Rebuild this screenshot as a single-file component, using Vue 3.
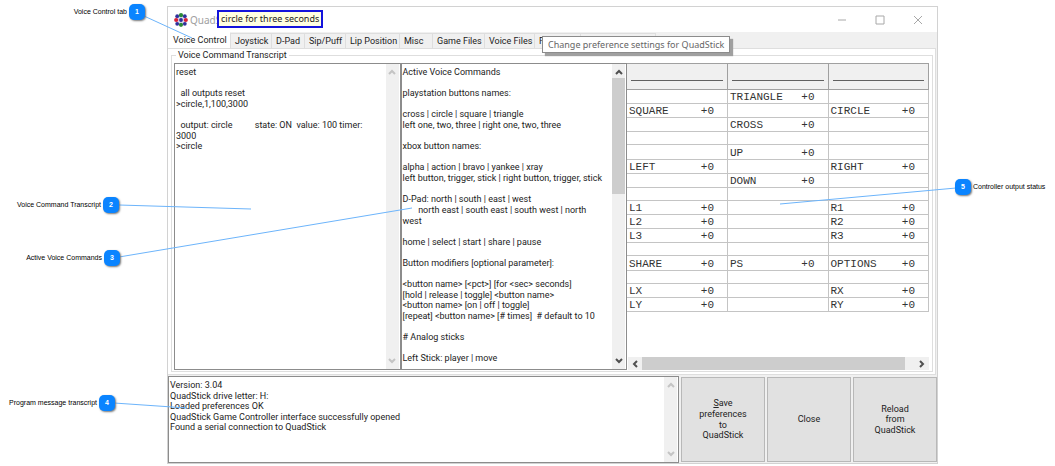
<script setup>
const tabs = [
  { label: 'Voice Control', size: 'w63' },
  { label: 'Joystick', size: 'w41' },
  { label: 'D-Pad', size: 'w33' },
  { label: 'Sip/Puff', size: 'w41' },
  { label: 'Lip Position', size: 'w54' },
  { label: 'Misc', size: 'w33' },
  { label: 'Game Files', size: 'w52' },
  { label: 'Voice Files', size: 'w50' },
  { label: 'F', size: 'w46' },
  { label: '', size: 'w75' }
]

const transcript = `reset

  all outputs reset
>circle,1,100,3000

  output: circle          state: ON  value: 100 timer:
3000
>circle`

const commands = `Active Voice Commands

playstation buttons names:

cross | circle | square | triangle
left one, two, three | right one, two, three

xbox button names:

alpha | action | bravo | yankee | xray
left button, trigger, stick | right button, trigger, stick

D-Pad: north | south | east | west
       north east | south east | south west | north
west

home | select | start | share | pause

Button modifiers [optional parameter]:

<button name> [<pct>] [for <sec> seconds]
[hold | release | toggle] <button name>
<button name> [on | off | toggle]
[repeat] <button name> [# times]  # default to 10

# Analog sticks

Left Stick: player | move`

const messages = `Version: 3.04
QuadStick drive letter: H:
Loaded preferences OK
QuadStick Game Controller interface successfully opened
Found a serial connection to QuadStick`

const outputs = [
  ['', 'TRIANGLE', ''],
  ['SQUARE', '', 'CIRCLE'],
  ['', 'CROSS', ''],
  ['', '', ''],
  ['', 'UP', ''],
  ['LEFT', '', 'RIGHT'],
  ['', 'DOWN', ''],
  ['', '', ''],
  ['L1', '', 'R1'],
  ['L2', '', 'R2'],
  ['L3', '', 'R3'],
  ['', '', ''],
  ['SHARE', 'PS', 'OPTIONS'],
  ['', '', ''],
  ['LX', '', 'RX'],
  ['LY', '', 'RY']
]
</script>

<template>
  <div class="stage">
    <main class="window">
      <header class="titlebar">
        <svg class="logo" viewBox="0 0 14 14" aria-hidden="true">
          <circle cx="7" cy="7" r="6" fill="#dcdcf0" />
          <g fill="#30309c">
            <circle cx="3.2" cy="3.2" r="1.9" /><circle cx="10.8" cy="3.2" r="1.9" />
            <circle cx="3.2" cy="10.8" r="1.9" /><circle cx="10.8" cy="10.8" r="1.9" />
            <circle cx="7" cy="7" r="1.9" />
          </g>
          <g fill="#2c8a3a"><circle cx="7" cy="2.2" r="2.1" /><circle cx="7" cy="11.8" r="2.1" /></g>
          <g fill="#d8203a"><circle cx="2.2" cy="7" r="2.1" /><circle cx="11.8" cy="7" r="2.1" /></g>
        </svg>
        <h1 class="title">QuadS</h1>
        <div class="controls">
          <button type="button" aria-label="Minimize"><svg viewBox="0 0 10 10"><path d="M1 5H9" /></svg></button>
          <button type="button" aria-label="Maximize"><svg viewBox="0 0 10 10"><path d="M1 1H9V9H1Z" /></svg></button>
          <button type="button" aria-label="Close window"><svg viewBox="0 0 10 10"><path d="M1 1L9 9M9 1L1 9" /></svg></button>
        </div>
        <div class="heard">circle for three seconds</div>
      </header>

      <nav class="tabs" role="tablist">
        <button
          v-for="(tab, i) in tabs"
          :key="i"
          type="button"
          role="tab"
          class="tab"
          :class="[tab.size, { active: i === 0 }]"
          :aria-selected="i === 0"
        >{{ tab.label }}</button>
        <div class="tooltip" role="tooltip">Change preference settings for QuadStick</div>
      </nav>

      <section class="page">
        <fieldset class="group">
          <legend>Voice Command Transcript</legend>
          <div class="panels">
            <div class="textpane">
              <textarea readonly aria-label="Voice command transcript" :value="transcript"></textarea>
              <div class="vbar idle">
                <svg viewBox="0 0 8 6"><path d="M1 5L4 2L7 5" /></svg>
                <svg viewBox="0 0 8 6"><path d="M1 1L4 4L7 1" /></svg>
              </div>
            </div>
            <div class="textpane">
              <textarea readonly aria-label="Active voice commands" :value="commands"></textarea>
              <div class="vbar">
                <svg viewBox="0 0 8 6"><path d="M1 5L4 2L7 5" /></svg>
                <div class="track"><div class="thumb"></div></div>
                <svg viewBox="0 0 8 6"><path d="M1 1L4 4L7 1" /></svg>
              </div>
            </div>
            <div class="status">
              <table>
                <thead>
                  <tr><th v-for="n in 3" :key="n" scope="col"><span class="rule"></span></th></tr>
                </thead>
                <tbody>
                  <tr v-for="(row, r) in outputs" :key="r">
                    <td v-for="(name, c) in row" :key="c">
                      <div v-if="name" class="reading"><span>{{ name }}</span><span>+0</span></div>
                    </td>
                  </tr>
                </tbody>
              </table>
              <div class="hbar">
                <svg viewBox="0 0 6 8"><path d="M5 1L2 4L5 7" /></svg>
                <div class="hthumb"></div>
                <svg viewBox="0 0 6 8"><path d="M1 1L4 4L1 7" /></svg>
              </div>
            </div>
          </div>
        </fieldset>
      </section>

      <footer class="bottom">
        <div class="textpane">
          <textarea readonly aria-label="Program messages" :value="messages"></textarea>
          <div class="vbar idle">
            <svg viewBox="0 0 8 6"><path d="M1 5L4 2L7 5" /></svg>
            <svg viewBox="0 0 8 6"><path d="M1 1L4 4L7 1" /></svg>
          </div>
        </div>
        <button type="button" class="action"><span><u>S</u>ave<br>preferences<br>to<br>QuadStick</span></button>
        <button type="button" class="action">Close</button>
        <button type="button" class="action"><span>Reload<br>from<br>QuadStick</span></button>
      </footer>
    </main>

    <svg class="leads left" viewBox="0 0 420 466" aria-hidden="true">
      <path d="M144 16L192 38M119 205L251 209M119 257L412 208M114 403L187 408" />
    </svg>
    <svg class="leads right" viewBox="0 0 275 466" aria-hidden="true">
      <path d="M176 188L0 204" />
    </svg>
    <div class="callout c1"><span>Voice Control tab</span><b>1</b></div>
    <div class="callout c2"><span>Voice Command Transcript</span><b>2</b></div>
    <div class="callout c3"><span>Active Voice Commands</span><b>3</b></div>
    <div class="callout c4"><span>Program message transcript</span><b>4</b></div>
    <div class="callout c5"><b>5</b><span>Controller output status</span></div>
  </div>
</template>

<style>
body { margin: 0; background: #fff; }
</style>

<style scoped>
* { box-sizing: border-box; }
.stage {
  position: relative;
  padding: 6px 117px 2px 167px;
  font-family: Roboto, "DejaVu Sans Condensed", sans-serif;
  font-size: 9px;
  line-height: 1.18;
  color: #222;
}
button, textarea {
  font: inherit;
  color: inherit;
  margin: 0;
  padding: 0;
  border: 0;
  border-radius: 0;
}
.window {
  display: flex;
  flex-direction: column;
  border: 1px solid #d2d2d2;
  background: #f0f0f0;
}
.titlebar {
  position: relative;
  display: flex;
  align-items: center;
  height: 25px;
  padding-left: 6px;
  background: #fff;
}
.logo { width: 14px; height: 14px; }
.title {
  margin: 0 0 0 2px;
  font: 400 10px/16px "Noto Sans", sans-serif;
  color: #a0a0a0;
}
.controls { display: flex; margin-left: auto; }
.controls button {
  display: flex;
  align-items: center;
  justify-content: center;
  width: 38px;
  height: 24px;
  background: none;
}
.controls svg { width: 10px; height: 10px; fill: none; stroke: #a8a8a8; stroke-width: 1; }
.heard {
  position: absolute;
  left: 49px;
  top: 3px;
  padding: 0 2px;
  border: 2px solid #1414dc;
  background: #ffffe1;
  font: 9px/14px "Noto Sans", sans-serif;
  white-space: nowrap;
}
.tabs {
  position: relative;
  display: flex;
  align-items: flex-end;
  height: 16px;
}
.tab {
  height: 15px;
  padding-left: 4px;
  border: 1px solid #dedede;
  border-width: 1px 1px 0 0;
  background: #f0f0f0;
  text-align: left;
  white-space: nowrap;
}
.tab.active { height: 16px; background: #fff; border-top-color: #fff; padding-left: 5px; }
.w63 { width: 63px; }
.w41 { width: 41px; }
.w33 { width: 33px; }
.w54 { width: 54px; }
.w52 { width: 52px; }
.w50 { width: 50px; }
.w46 { width: 46px; }
.w75 { width: 75px; }
.tooltip {
  position: absolute;
  left: 374px;
  top: 4px;
  padding: 0 5px;
  border: 1px solid #8c8c8c;
  background: #fff;
  box-shadow: 3px 3px 1px #a0a0a0;
  color: #666;
  font: 9px/15px "Noto Sans", sans-serif;
  white-space: nowrap;
}
.page {
  padding: 1px 2px 2px 3px;
  margin-right: 1px;
  border: 1px solid #dedede;
  border-width: 1px 1px 1px 0;
  background: #fff;
}
.group {
  min-width: 0;
  margin: 0;
  padding: 2px 3px 1px 2px;
  border: 1px solid #dedede;
}
.group legend { margin-left: 2px; padding: 0 2px; line-height: 11px; }
.panels { display: grid; grid-template-columns: 3fr 3fr 4fr; height: 307px; }
.textpane {
  display: flex;
  min-width: 0;
  border: 1px solid #8c8c8c;
  background: #fff;
}
.textpane textarea {
  flex: 1;
  min-width: 0;
  padding: 3px 0 0 1px;
  background: none;
  resize: none;
  outline: none;
  overflow: hidden;
  white-space: pre;
}
.vbar {
  display: flex;
  flex-direction: column;
  align-items: center;
  justify-content: space-between;
  width: 13px;
  margin-right: 1px;
  padding: 5px 0;
  background: #f0f0f0;
}
.vbar svg, .hbar svg { fill: none; stroke: #505050; stroke-width: 2; }
.vbar svg { width: 8px; height: 6px; }
.vbar.idle svg { stroke: #c4c4c4; }
.track { flex: 1; align-self: stretch; margin: 3px 0; }
.thumb { height: 42%; background: #cdcdcd; }
.status { display: flex; flex-direction: column; justify-content: space-between; min-width: 0; }
table {
  width: 100%;
  height: 249px;
  border-collapse: collapse;
  table-layout: fixed;
  font: 11px/11px "Courier New", "Liberation Mono", monospace;
  color: #333;
}
th { height: 26px; padding: 8px 4px 0; border: 1px solid #a0a0a0; background: #f0f0f0; }
td { height: 13px; padding: 2px 13px 0 2px; border: 1px solid #c4c4c4; }
th:first-child, td:first-child { border-left: 0; }
.rule { display: block; height: 1px; background: #606060; }
.reading { display: flex; justify-content: space-between; }
.hbar { display: flex; align-items: center; height: 13px; padding: 0 4px; margin-left: 1px; background: #f0f0f0; }
.hbar svg { width: 6px; height: 8px; }
.hthumb { flex: 1; height: 13px; margin: 0 14px 0 4px; background: #cdcdcd; }
.bottom {
  display: grid;
  grid-template-columns: 1fr 84px 84px 84px;
  column-gap: 2px;
  height: 87px;
  margin-top: 1px;
}
.action {
  display: flex;
  align-items: center;
  justify-content: center;
  margin: 1px 0;
  border: 1px solid #b8b8b8;
  background: #e1e1e1;
  text-align: center;
}
.leads { position: absolute; top: 0; height: 466px; pointer-events: none; }
.leads path { fill: none; stroke: #6cb4fb; stroke-width: 1; }
.leads.left { left: 0; width: 420px; }
.leads.right { right: 0; width: 275px; }
.callout {
  position: absolute;
  display: flex;
  align-items: center;
  gap: 2px;
  font: 7px/16px "Liberation Sans", Arial, sans-serif;
  color: #000;
  white-space: nowrap;
}
.callout b {
  width: 16px;
  height: 16px;
  border-radius: 5px;
  background: #0a84ff;
  box-shadow: 1px 1px 2px #777;
  color: #fff;
  text-align: center;
}
.c1 { right: calc(100% - 145px); top: 4px; }
.c2 { right: calc(100% - 119px); top: 197px; }
.c3 { right: calc(100% - 120px); top: 250px; }
.c4 { right: calc(100% - 115px); top: 395px; }
.c5 { left: calc(100% - 100px); top: 179px; }
</style>
